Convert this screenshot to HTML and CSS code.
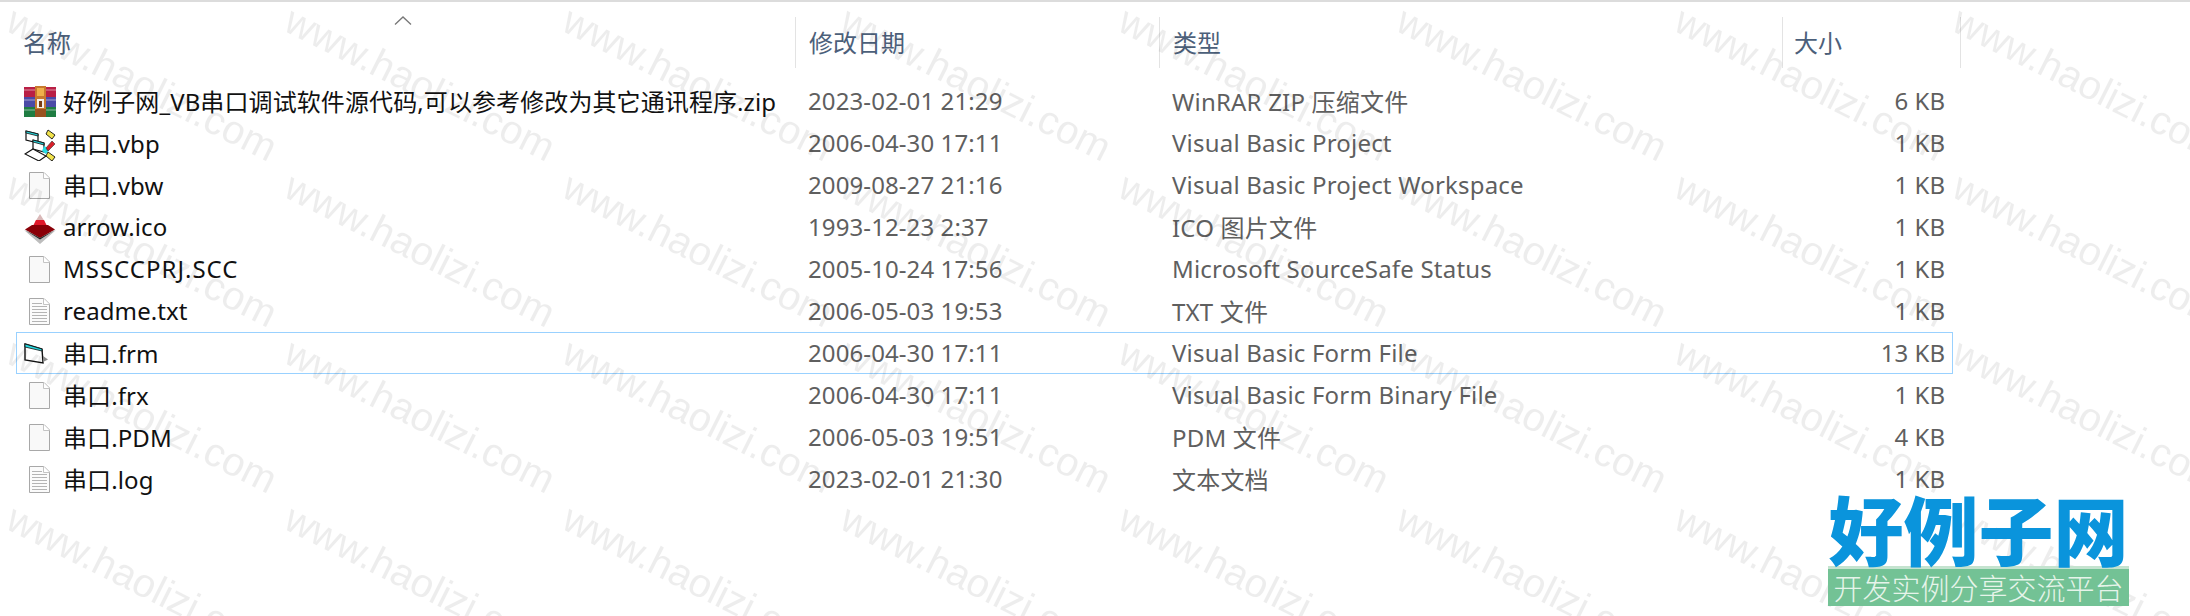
FILE: index.html
```html
<!DOCTYPE html>
<html lang="zh-CN">
<head>
    <meta charset="UTF-8">
    <title>串口调试软件</title>
    <link rel="stylesheet" href="styles.css">
</head>
<body>
    <svg class="defs" width="0" height="0">
        <defs>
            <symbol id="doc" viewBox="0 0 21 27">
                <path d="M.5.5H15L20.500 6V26.500H.5Z" fill="#f9f9f9" stroke="#a8a8a8"/>
                <path d="M14.500.5V6.500H20.500" fill="#fff" stroke="#c4c4c4"/>
            </symbol>
            <symbol id="txt" viewBox="0 0 21 27">
                <path d="M.5.5H15L20.500 6V26.500H.5Z" fill="#fbfbfb" stroke="#a8a8a8"/>
                <path d="M14.500.5V6.500H20.500" fill="#fff" stroke="#c4c4c4"/>
                <path d="M3 5.500H13M3 8.500H18M3 11.500H18M3 14.500H18M3 17.500H18M3 20.500H18M3 23.500H18" stroke="#b4b4b4"/>
            </symbol>
        </defs>
    </svg>

    <div class="explorer">
        <div class="header">
            <div class="col-head col-name">名称
                <svg class="sort" width="18" height="9" viewBox="0 0 18 9"><path d="M1 8.500L9 1L17 8.500" fill="none" stroke="#777" stroke-width="1.300"/></svg>
            </div>
            <div class="col-head col-date">修改日期</div>
            <div class="col-head col-type">类型</div>
            <div class="col-head col-size">大小</div>
        </div>

        <div class="rows">
            <div class="row">
                <svg class="icon" width="32" height="32" viewBox="0 0 32 32">
                    <rect x="0" y="1" width="32" height="10" fill="#b91f45"/>
                    <rect x="0" y="11" width="32" height="10" fill="#4b4aa6"/>
                    <rect x="0" y="21" width="32" height="10" fill="#1f7d42"/>
                    <path d="M0 4H32M0 14H32M0 24H32" stroke="#fff" stroke-opacity=".25" stroke-width="2"/>
                    <rect x="11" y="0" width="11" height="31" fill="#c87a2e"/>
                    <rect x="13" y="2" width="7" height="8" fill="#f0b04a"/>
                    <rect x="13" y="13" width="7" height="9" fill="#f4f0ea"/>
                    <rect x="15" y="15" width="3" height="6" fill="#7a3b12"/>
                    <rect x="11" y="23" width="11" height="8" fill="#9a5220"/>
                </svg>
                <span class="name">好例子网_VB串口调试软件源代码,可以参考修改为其它通讯程序.zip</span>
                <span class="date">2023-02-01 21:29</span>
                <span class="type">WinRAR ZIP 压缩文件</span>
                <span class="size">6 KB</span>
            </div>
            <div class="row">
                <svg class="icon low" width="32" height="32" viewBox="0 0 32 32">
                    <path d="M2 2L14 5V14L2 11Z" fill="#fff" stroke="#111" stroke-width="1.200"/>
                    <path d="M2 2L14 5V7L2 4Z" fill="#27d9e0" stroke="#111" stroke-width=".8"/>
                    <path d="M9 11L20 14V23L9 20Z" fill="#fff" stroke="#111" stroke-width="1.200"/>
                    <path d="M9 11L20 14V16L9 13Z" fill="#27d9e0" stroke="#111" stroke-width=".8"/>
                    <path d="M1 25L9 20L22 27L15 32Z" fill="#fff" stroke="#111" stroke-width="1.100"/>
                    <path d="M20 17L26 20L22 25L18 22Z" fill="#27d9e0"/>
                    <path d="M24 1L31 6L28 10L22 5Z" fill="#f2e34b" stroke="#111" stroke-width=".9"/>
                    <path d="M28 12L31 15L24 22L22 19Z" fill="#d8202a" stroke="#333" stroke-width=".6"/>
                    <path d="M24 23L31 28L28 32L22 27Z" fill="#f2e34b" stroke="#111" stroke-width=".9"/>
                </svg>
                <span class="name">串口.vbp</span>
                <span class="date">2006-04-30 17:11</span>
                <span class="type">Visual Basic Project</span>
                <span class="size">1 KB</span>
            </div>
            <div class="row">
                <svg class="icon doc" width="21" height="27"><use href="#doc"/></svg>
                <span class="name">串口.vbw</span>
                <span class="date">2009-08-27 21:16</span>
                <span class="type">Visual Basic Project Workspace</span>
                <span class="size">1 KB</span>
            </div>
            <div class="row">
                <svg class="icon low" width="32" height="30" viewBox="0 0 32 30">
                    <path d="M0 16L16 30L32 16L16 23Z" fill="#bdbdbd"/>
                    <path d="M16 0L11 8H21Z" fill="#d9b8b8"/>
                    <path d="M12 6H20L23 12H9Z" fill="#e0182a"/>
                    <path d="M8 11H24L31 15.500L16 24L1 15.500Z" fill="#8a0008"/>
                    <path d="M1 16L16 24L31 16L16 25.500Z" fill="#222"/>
                </svg>
                <span class="name">arrow.ico</span>
                <span class="date">1993-12-23 2:37</span>
                <span class="type">ICO 图片文件</span>
                <span class="size">1 KB</span>
            </div>
            <div class="row">
                <svg class="icon doc" width="21" height="27"><use href="#doc"/></svg>
                <span class="name caps">MSSCCPRJ.SCC</span>
                <span class="date">2005-10-24 17:56</span>
                <span class="type">Microsoft SourceSafe Status</span>
                <span class="size">1 KB</span>
            </div>
            <div class="row">
                <svg class="icon doc" width="21" height="27"><use href="#txt"/></svg>
                <span class="name">readme.txt</span>
                <span class="date">2006-05-03 19:53</span>
                <span class="type">TXT 文件</span>
                <span class="size">1 KB</span>
            </div>
            <div class="row selected">
                <svg class="icon" width="24" height="21" viewBox="0 0 24 21">
                    <path d="M1 1L18 6L19 20L1 17Z" fill="#fff" stroke="#111" stroke-width="1.400"/>
                    <path d="M1 1L18 6V8L1 4Z" fill="#27d9e0" stroke="#111" stroke-width=".8"/>
                    <path d="M19 13L24 16.500L19 19Z" fill="#8a8a8a"/>
                </svg>
                <span class="name">串口.frm</span>
                <span class="date">2006-04-30 17:11</span>
                <span class="type">Visual Basic Form File</span>
                <span class="size">13 KB</span>
            </div>
            <div class="row">
                <svg class="icon doc" width="21" height="27"><use href="#doc"/></svg>
                <span class="name">串口.frx</span>
                <span class="date">2006-04-30 17:11</span>
                <span class="type">Visual Basic Form Binary File</span>
                <span class="size">1 KB</span>
            </div>
            <div class="row">
                <svg class="icon doc" width="21" height="27"><use href="#doc"/></svg>
                <span class="name">串口.PDM</span>
                <span class="date">2006-05-03 19:51</span>
                <span class="type">PDM 文件</span>
                <span class="size">4 KB</span>
            </div>
            <div class="row">
                <svg class="icon doc" width="21" height="27"><use href="#txt"/></svg>
                <span class="name">串口.log</span>
                <span class="date">2023-02-01 21:30</span>
                <span class="type">文本文档</span>
                <span class="size">1 KB</span>
            </div>
        </div>
    </div>

    <!-- watermark tiles over the whole page -->
    <svg class="watermark" width="2190" height="616">
        <defs>
            <pattern id="wm" x="-3" y="1" width="278" height="166" patternUnits="userSpaceOnUse">
                <text x="139" y="95" text-anchor="middle" transform="rotate(26.600 139 95)" class="wm-text">www.haolizi.com</text>
            </pattern>
        </defs>
        <rect width="2190" height="616" fill="url(#wm)"/>
    </svg>

    <div class="logo">
        <div class="logo-title">好例子网</div>
        <div class="logo-bar">开发实例分享交流平台</div>
    </div>
</body>
</html>
```

FILE: styles.css
```css
body {
    margin: 0;
    background-color: #fff;
    font-family: "Noto Sans", "Noto Sans CJK SC", sans-serif;
    font-size: 24px;
    width: 2190px;
    height: 616px;
    overflow: hidden;
    position: relative;
}
.defs {
    position: absolute;
}
.explorer {
    border-top: 2px solid #dcdcdc;
}
.header {
    display: grid;
    grid-template-columns: 795px 364px 623px 179px;
    margin-top: 15px;
    height: 51px;
}
.col-head {
    color: #4c607a;
    line-height: 51px;
    padding-left: 13px;
    border-left: 1px solid #e3e3e3;
    position: relative;
}
.col-name {
    border-left: none;
    padding-left: 23px;
}
.col-size {
    padding-left: 11px;
    border-right: 1px solid #e3e3e3;
}
.sort {
    position: absolute;
    left: 394px;
    top: -1px;
}
.rows {
    margin: 12px 0 0 16px;
    width: 1937px;
}
.row {
    display: grid;
    grid-template-columns: 46px 745px 364px 1fr 100px;
    align-items: center;
    height: 42px;
    box-sizing: border-box;
    border: 1px solid transparent;
    padding-right: 7px;
    padding-bottom: 2px;
    color: #5f5f5f;
    white-space: nowrap;
}
.row.selected {
    border-color: #99d1ff;
}
.icon {
    margin-left: 7px;
    margin-top: 3px;
}
.icon.low {
    margin-top: 5px;
}
.icon.doc {
    margin-left: 12px;
}
.name {
    color: #111;
    letter-spacing: .1px;
}
.name.caps {
    letter-spacing: 1px;
}
.date {
    letter-spacing: .1px;
}
.type {
    letter-spacing: .2px;
}
.size {
    text-align: right;
}
.watermark {
    position: absolute;
    left: 0;
    top: 0;
    pointer-events: none;
}
.wm-text {
    font-family: "Liberation Sans", sans-serif;
    font-size: 40px;
    fill: rgba(0, 0, 0, 0.07);
}
.logo {
    position: absolute;
    left: 1828px;
    top: 490px;
    width: 301px;
}
.logo-title {
    color: #0a94dc;
    font-family: "Noto Sans CJK SC", sans-serif;
    font-weight: 900;
    font-size: 75px;
    line-height: 76px;
    text-align: center;
}
.logo-bar {
    background-color: #73c295;
    border-top: 3px solid #c4e3cf;
    color: #e6f4ea;
    font-family: "Noto Sans CJK SC", sans-serif;
    font-size: 29px;
    font-weight: 300;
    line-height: 37px;
    text-align: center;
    white-space: nowrap;
}
```
